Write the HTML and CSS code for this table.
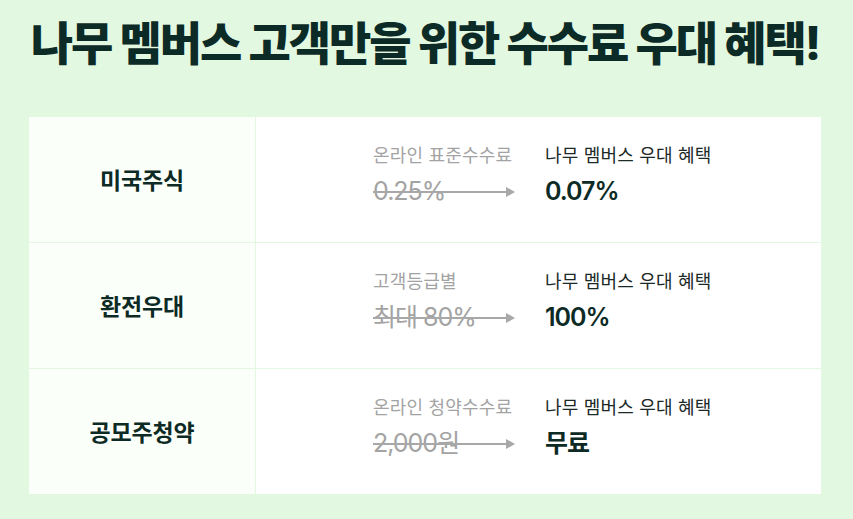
FILE: index.html
```html
<!DOCTYPE html>
<html lang="ko">
<head>
    <meta charset="utf-8">
    <title>나무 멤버스 수수료 우대 혜택</title>
    <link rel="stylesheet" href="styles.css">
</head>
<body>
    <div class="benefit">
        <h1 class="benefit-title">나무 멤버스 고객만을 위한 수수료 우대 혜택!</h1>

        <div class="benefit-table">
            <div class="benefit-row">
                <div class="benefit-name">미국주식</div>
                <div class="benefit-detail">
                    <div class="old">
                        <div class="old-label">온라인 표준수수료</div>
                        <div class="old-value"><span>0.25%</span></div>
                    </div>
                    <div class="new">
                        <div class="new-label">나무 멤버스 우대 혜택</div>
                        <div class="new-value">0.07%</div>
                    </div>
                </div>
            </div>

            <div class="benefit-row">
                <div class="benefit-name">환전우대</div>
                <div class="benefit-detail">
                    <div class="old">
                        <div class="old-label">고객등급별</div>
                        <div class="old-value"><span>최대 80%</span></div>
                    </div>
                    <div class="new">
                        <div class="new-label">나무 멤버스 우대 혜택</div>
                        <div class="new-value">100%</div>
                    </div>
                </div>
            </div>

            <div class="benefit-row">
                <div class="benefit-name">공모주청약</div>
                <div class="benefit-detail">
                    <div class="old">
                        <div class="old-label">온라인 청약수수료</div>
                        <div class="old-value"><span>2,000원</span></div>
                    </div>
                    <div class="new">
                        <div class="new-label">나무 멤버스 우대 혜택</div>
                        <div class="new-value">무료</div>
                    </div>
                </div>
            </div>
        </div>
    </div>
</body>
</html>
```

FILE: styles.css
```css
body {
    margin: 0;
    background-color: #e3f8e1;
    font-family: Inter, "Noto Sans CJK KR", sans-serif;
    color: #0d2a25;
}

.benefit {
    padding: 13px 32px 24px 29px;
}

.benefit-title {
    margin: 0;
    height: 104px;
    font-size: 46px;
    font-weight: 800;
    letter-spacing: -2px;
    line-height: 60px;
    text-align: center;
    color: #0c2b26;
}

.benefit-table {
    background-color: #fff;
}

.benefit-row {
    display: flex;
    height: 125px;
    border-bottom: 1px solid #e3f8e1;
}

.benefit-row:last-child {
    border-bottom: none;
}

.benefit-name {
    width: 226px;
    display: flex;
    align-items: center;
    justify-content: center;
    padding-bottom: 2px;
    background-color: #fbfffa;
    border-right: 1px solid #e3f8e1;
    font-size: 23px;
    font-weight: 700;
    letter-spacing: -0.2px;
}

.benefit-detail {
    flex: 1;
    display: flex;
    align-items: center;
    justify-content: center;
    gap: 30px;
    padding: 0 0 10px 5px;
}

.old {
    width: 142px;
}

.new {
    width: 164px;
}

.old-label,
.new-label {
    font-size: 18px;
    letter-spacing: 0.2px;
    line-height: 24px;
    white-space: nowrap;
}

.old-label {
    color: #a3a3a3;
}

.new-label {
    color: #1c2a27;
}

.old-value,
.new-value {
    margin-top: 8px;
    font-size: 25px;
    line-height: 30px;
    letter-spacing: -1px;
    white-space: nowrap;
}

.old-value {
    position: relative;
    color: #a3a3a3;
}

.old-value span {
    text-decoration: line-through;
    text-decoration-thickness: 2px;
    text-decoration-color: #a8a8a8;
}

/* arrow continues the strike line */
.old-value::after {
    content: "";
    position: absolute;
    left: 40px;
    right: 8px;
    top: 50%;
    height: 2px;
    background-color: #a8a8a8;
}

.old-value::before {
    content: "";
    position: absolute;
    right: 0;
    top: 50%;
    margin-top: -4px;
    border-left: 9px solid #a8a8a8;
    border-top: 5px solid transparent;
    border-bottom: 5px solid transparent;
}

.new-value {
    font-weight: 600;
}
```
